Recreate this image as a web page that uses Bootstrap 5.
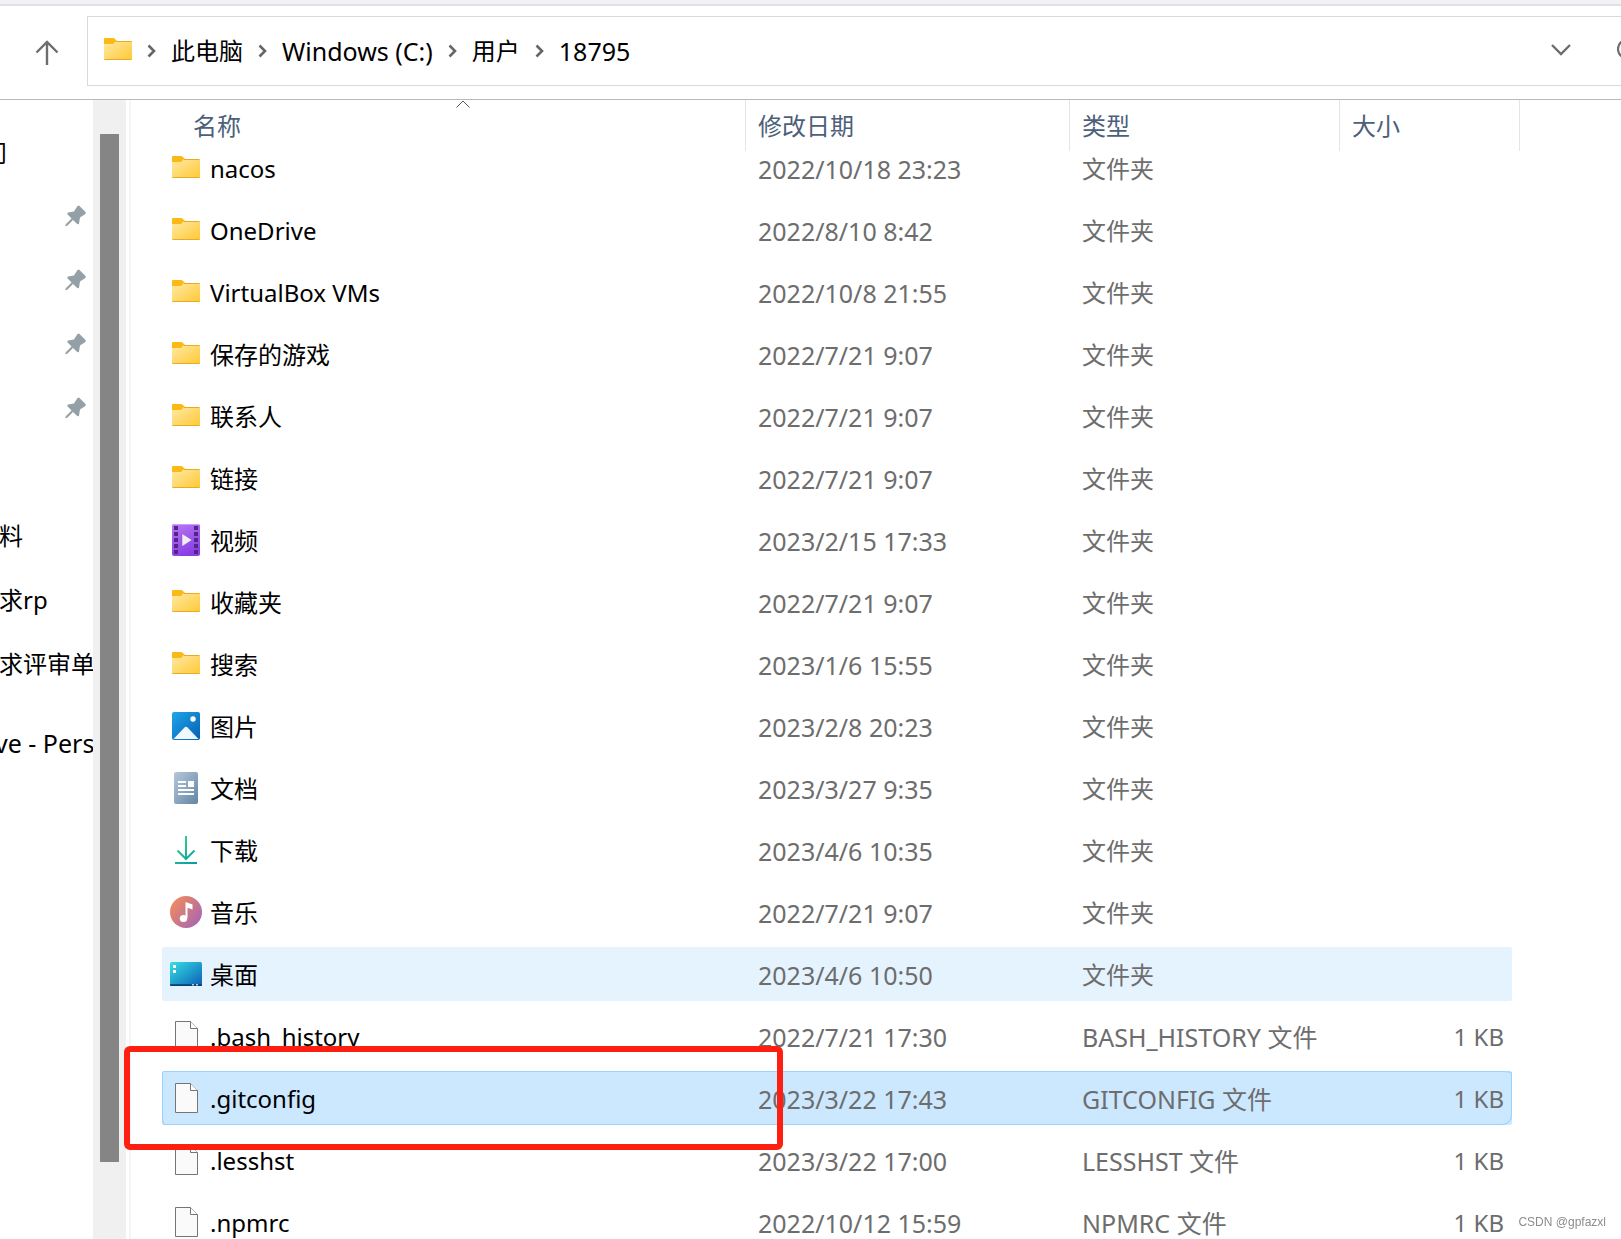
<!DOCTYPE html>
<html lang="zh-CN">
<head>
<meta charset="utf-8">
<meta name="viewport" content="width=device-width, initial-scale=1">
<title>18795</title>
<link href="https://cdn.jsdelivr.net/npm/bootstrap@5.3.0/dist/css/bootstrap.min.css" rel="stylesheet">
<style>
  body { font-family: "Noto Sans", "Noto Sans CJK SC", sans-serif; font-size: 24px; line-height: 34px; color: #000; background: #fff; }
  svg { display: block; flex: none; }
  a { color: inherit; text-decoration: none; }

  .title-edge { height: 6px; background: #f1f1f8; border-bottom: 2px solid #e0e0e6; }
  .address-row { height: 94px; padding: 10px 0 13px; border-bottom: 1px solid #b9b9b9; }
  .up-btn { width: 87px; padding: 4px 0 0 6px; color: #6d6d6d; }
  .address-box { border: 1px solid #d9d9d9; border-right: 0; padding-left: 14px; }
  .crumbs { --bs-breadcrumb-margin-bottom: 0; gap: 15px; font-size: 25px; }
  .crumbs .folder-mark { margin: -2px -2px 0 0; }
  .crumbs .cjk { font-size: 24px; }
  .drop-btn, .refresh-btn { color: #6d6d6d; }
  .drop-btn { padding: 0 45px 2px 0; }

  .side-list { width: 93px; padding-top: 20px; overflow: hidden; white-space: nowrap; }
  .side-list li { height: 64px; padding-top: 15px; margin-left: -1px; }
  .side-list .pinned { padding-left: 66px; padding-top: 21px; }
  .side-list .cut-glyph { text-indent: -16px; padding-top: 16px; }
  .side-list .cut-latin { text-indent: -4px; margin-top: 15px; font-size: 25px; }

  .scroll-track { width: 33px; padding: 34px 7px 0; background: #f0f0f0; }
  .scroll-thumb { width: 19px; height: 93%; background: #858585; }
  .splitter { width: 2px; margin-left: 3px; background: #f5f5f5; }

  .file-table { width: 1358px; margin-left: 31px; table-layout: fixed; border-collapse: separate; border-spacing: 0; color: #6d6d6d; }
  .file-table th { height: 51px; padding: 9px 0 8px 12px; font-weight: 400; color: #4c607a; border-right: 1px solid #e5e5e5; position: relative; }
  .file-table th:first-child { padding-left: 31px; }
  .sort-mark { position: absolute; top: 0; left: 293px; }
  .col-name { width: 584px; } .col-date { width: 324px; } .col-kind { width: 270px; } .col-size { width: 180px; }
  .file-table td { padding: 11px 0 9px 12px; border-bottom: 8px solid transparent; background-clip: padding-box; white-space: nowrap; }
  .file-table td:first-child { padding-left: 8px; color: #000; border-radius: 2px 0 0 2px / 2px 0 0 10px; position: relative; }
  .file-table td:first-child svg { margin: -2px 0 0; }
  .file-table td:nth-child(2), .file-table .ext { font-size: 25px; }
  .file-table td:last-child { padding-right: 8px; border-right: 8px solid transparent; border-radius: 0 10px 10px 0 / 0 2px 10px 0; text-align: right; }
  .file-table .under-header td { padding-top: 1px; }
  .row-hover td { background-color: #e5f3ff; }
  .row-picked td { background-color: #cce8ff; box-shadow: inset 0 1px #99d1ff, inset 0 -1px #99d1ff; }
  .row-picked td:first-child { box-shadow: inset 0 1px #99d1ff, inset 0 -1px #99d1ff, inset 1px 0 #99d1ff; }
  .row-picked td:last-child { box-shadow: inset 0 1px #99d1ff, inset 0 -1px #99d1ff, inset -1px 0 #99d1ff; }
  .marker { position: absolute; z-index: 2; top: -25px; bottom: -25px; left: -38px; right: -37px; border: 6px solid #ff1f10; border-radius: 6px; pointer-events: none; }
  .credit { position: fixed; right: 15px; bottom: 8px; font: 12px/18px "Liberation Sans", sans-serif; color: #8c8c8c; }
</style>
<script src="https://cdn.jsdelivr.net/npm/bootstrap@5.3.0/dist/js/bootstrap.bundle.min.js"></script>
</head>
<body class="vh-100 d-flex flex-column overflow-hidden">

<svg width="0" height="0" class="position-absolute" aria-hidden="true">
  <defs>
    <linearGradient id="gFolder" x1="0" y1="0" x2="1" y2="1"><stop offset="0" stop-color="#ffe9a6"/><stop offset="1" stop-color="#ffc934"/></linearGradient>
    <linearGradient id="gVideo" x1="0" y1="0" x2=".4" y2="1"><stop offset="0" stop-color="#b978f5"/><stop offset="1" stop-color="#8a3fe6"/></linearGradient>
    <linearGradient id="gPicture" x1="0" y1="0" x2="1" y2="1"><stop offset="0" stop-color="#1fa5ea"/><stop offset="1" stop-color="#0560b4"/></linearGradient>
    <linearGradient id="gDoc" x1="0" y1="0" x2="1" y2="1"><stop offset="0" stop-color="#b6c8da"/><stop offset="1" stop-color="#6285a6"/></linearGradient>
    <linearGradient id="gDown" gradientUnits="userSpaceOnUse" x1="5" y1="4" x2="27" y2="28"><stop offset="0" stop-color="#3bd488"/><stop offset="1" stop-color="#0a9ba6"/></linearGradient>
    <linearGradient id="gMusic" x1="0" y1=".1" x2="1" y2=".9"><stop offset="0" stop-color="#f58e56"/><stop offset="1" stop-color="#a463b8"/></linearGradient>
    <linearGradient id="gDesk" x1="0" y1="0" x2="1" y2="1"><stop offset="0" stop-color="#37dfe6"/><stop offset="1" stop-color="#0b5fb5"/></linearGradient>
    <symbol id="folder" viewBox="0 0 32 32"><path d="M2 12V5q0-1 1-1h8q1.200 0 2 1l2 2v4z" fill="#fbb916"/><path d="M2 10h9l3-3h15q1 0 1 1v17q0 1-1 1H3q-1 0-1-1z" fill="url(#gFolder)"/><path d="M14 7.500h15.500M2.500 25.500h27" stroke="#e9ab25" fill="none"/></symbol>
    <symbol id="video" viewBox="0 0 32 32"><rect x="2" width="28" height="32" rx="2" fill="url(#gVideo)"/><path d="M3 .5h26" stroke="#cd9bfa"/><path d="M4 2h4v4H4zm0 6h4v4H4zm0 6h4v4H4zm0 6h4v4H4zm0 6h4v4H4zM24 2h4v4h-4zm0 6h4v4h-4zm0 6h4v4h-4zm0 6h4v4h-4zm0 6h4v4h-4z" fill="#502687"/><path d="M12 9.500l10 6.500-10 6.500z" fill="#eee" stroke="#7a37cc" stroke-width=".4"/></symbol>
    <symbol id="picture" viewBox="0 0 32 32"><rect x="2" y="2" width="28" height="28" rx="2" fill="url(#gPicture)"/><path d="M3.500 29l11-11.500q1.500-1.500 3 0L28.500 29z" fill="#f0f7fd"/><circle cx="23" cy="9" r="2.700" fill="#fff"/></symbol>
    <symbol id="document" viewBox="0 0 32 32"><rect x="4" width="24" height="32" rx="2" fill="url(#gDoc)"/><path d="M8 9h8v2H8zm0 4h8v2H8zm10-4h6v6h-6zM8 17h16v2H8zm0 4h16v2H8z" fill="#fff"/></symbol>
    <symbol id="download" viewBox="0 0 32 32"><path d="M16 2v23M7.500 16.500L16 25l8.500-8.500M5 29h22" fill="none" stroke="url(#gDown)" stroke-width="2"/></symbol>
    <symbol id="music" viewBox="0 0 32 32"><circle cx="16" cy="16" r="16" fill="url(#gMusic)"/><ellipse cx="13.500" cy="22.500" rx="3.700" ry="3.500" fill="#fff"/><path d="M15.500 6l7 2.500v5l-5-1.800V22h-2z" fill="#fff"/></symbol>
    <symbol id="desktop" viewBox="0 0 32 32"><rect y="4" width="32" height="24" rx="1.500" fill="url(#gDesk)"/><path d="M0 26.300h32v.7q0 1-1 1H1q-1 0-1-1z" fill="#0b3f70"/><path d="M3 7h3v3H3zm0 5h3v3H3z" fill="#fff"/><path d="M22 26h2v1.500h-2zm4 0h2v1.500h-2z" fill="#a9d3ef"/></symbol>
    <symbol id="file" viewBox="0 0 32 32"><path d="M5.500 1.500h15l7 7v22h-22z" fill="#fafafa" stroke="#757575"/><path d="M20.500 1.500v7h7" fill="#fff" stroke="#757575"/></symbol>
    <symbol id="pin" viewBox="0 0 22 22"><path d="M12.500 1q1-1 2 0l6 6q1 1-.2 2L15 12.500l-1 6q-.5 1.500-1.800.4L8 15l-5.500 5.500q-1.500 1-2 .5t.5-2L6.500 13.500 2.700 9.600Q1.500 8 3.200 7.400L9 6.500z" fill="#95a0a6"/></symbol>
    <symbol id="sep" viewBox="0 0 9 14"><path d="M1.500 1.500L7 7l-5.500 5.500" fill="none" stroke="#666" stroke-width="2.600"/></symbol>
  </defs>
</svg>

<div class="title-edge flex-shrink-0"></div>

<header class="address-row d-flex flex-shrink-0">
  <button type="button" class="up-btn btn border-0 rounded-0 d-flex align-items-center justify-content-center" aria-label="上移">
    <svg width="24" height="26" viewBox="0 0 24 26"><path d="M12 25V2M1.500 12.500L12 2l10.500 10.500" fill="none" stroke="currentColor" stroke-width="2.400"/></svg>
  </button>
  <div class="address-box flex-grow-1 d-flex align-items-center">
    <nav aria-label="路径" class="flex-grow-1">
      <ol class="crumbs breadcrumb flex-nowrap align-items-center">
        <li class="folder-mark"><svg width="32" height="32"><use href="#folder"/></svg></li>
        <li><svg width="9" height="14"><use href="#sep"/></svg></li>
        <li class="cjk"><a href="#">此电脑</a></li>
        <li><svg width="9" height="14"><use href="#sep"/></svg></li>
        <li><a href="#">Windows (C:)</a></li>
        <li><svg width="9" height="14"><use href="#sep"/></svg></li>
        <li class="cjk"><a href="#">用户</a></li>
        <li><svg width="9" height="14"><use href="#sep"/></svg></li>
        <li><a href="#" aria-current="page">18795</a></li>
      </ol>
    </nav>
    <button type="button" class="drop-btn btn border-0" aria-label="展开">
      <svg width="22" height="14" viewBox="0 0 22 14"><path d="M2 2l9 9 9-9" fill="none" stroke="currentColor" stroke-width="2.400"/></svg>
    </button>
    <button type="button" class="refresh-btn btn border-0 p-0 pb-1 overflow-hidden" aria-label="刷新">
      <svg width="4" height="20" viewBox="0 0 4 20"><circle cx="10" cy="10" r="9" fill="none" stroke="currentColor" stroke-width="2.200"/></svg>
    </button>
  </div>
</header>

<div class="d-flex flex-grow-1 overflow-hidden">
  <ul class="side-list list-unstyled mb-0 flex-shrink-0">
    <li class="cut-glyph">问</li>
    <li class="pinned"><svg width="22" height="22"><use href="#pin"/></svg></li>
    <li class="pinned"><svg width="22" height="22"><use href="#pin"/></svg></li>
    <li class="pinned"><svg width="22" height="22"><use href="#pin"/></svg></li>
    <li class="pinned"><svg width="22" height="22"><use href="#pin"/></svg></li>
    <li></li>
    <li>料</li>
    <li>求rp</li>
    <li>求评审单</li>
    <li class="cut-latin">ve - Pers</li>
  </ul>
  <div class="scroll-track flex-shrink-0"><div class="scroll-thumb"></div></div>
  <div class="splitter flex-shrink-0"></div>

  <main class="flex-grow-1">
    <table class="file-table">
      <thead>
        <tr>
          <th class="col-name" scope="col">名称<svg class="sort-mark" width="16" height="8" viewBox="0 0 16 8"><path d="M1.500 7.500L8 1l6.500 6.500" fill="none" stroke="#555"/></svg></th>
          <th class="col-date" scope="col">修改日期</th>
          <th class="col-kind" scope="col">类型</th>
          <th class="col-size" scope="col">大小</th>
        </tr>
      </thead>
      <tbody>
        <tr class="under-header"><td><div class="d-flex align-items-center gap-2"><svg width="32" height="32"><use href="#folder"/></svg>nacos</div></td><td>2022/10/18 23:23</td><td>文件夹</td><td></td></tr>
        <tr><td><div class="d-flex align-items-center gap-2"><svg width="32" height="32"><use href="#folder"/></svg>OneDrive</div></td><td>2022/8/10 8:42</td><td>文件夹</td><td></td></tr>
        <tr><td><div class="d-flex align-items-center gap-2"><svg width="32" height="32"><use href="#folder"/></svg>VirtualBox VMs</div></td><td>2022/10/8 21:55</td><td>文件夹</td><td></td></tr>
        <tr><td><div class="d-flex align-items-center gap-2"><svg width="32" height="32"><use href="#folder"/></svg>保存的游戏</div></td><td>2022/7/21 9:07</td><td>文件夹</td><td></td></tr>
        <tr><td><div class="d-flex align-items-center gap-2"><svg width="32" height="32"><use href="#folder"/></svg>联系人</div></td><td>2022/7/21 9:07</td><td>文件夹</td><td></td></tr>
        <tr><td><div class="d-flex align-items-center gap-2"><svg width="32" height="32"><use href="#folder"/></svg>链接</div></td><td>2022/7/21 9:07</td><td>文件夹</td><td></td></tr>
        <tr><td><div class="d-flex align-items-center gap-2"><svg width="32" height="32"><use href="#video"/></svg>视频</div></td><td>2023/2/15 17:33</td><td>文件夹</td><td></td></tr>
        <tr><td><div class="d-flex align-items-center gap-2"><svg width="32" height="32"><use href="#folder"/></svg>收藏夹</div></td><td>2022/7/21 9:07</td><td>文件夹</td><td></td></tr>
        <tr><td><div class="d-flex align-items-center gap-2"><svg width="32" height="32"><use href="#folder"/></svg>搜索</div></td><td>2023/1/6 15:55</td><td>文件夹</td><td></td></tr>
        <tr><td><div class="d-flex align-items-center gap-2"><svg width="32" height="32"><use href="#picture"/></svg>图片</div></td><td>2023/2/8 20:23</td><td>文件夹</td><td></td></tr>
        <tr><td><div class="d-flex align-items-center gap-2"><svg width="32" height="32"><use href="#document"/></svg>文档</div></td><td>2023/3/27 9:35</td><td>文件夹</td><td></td></tr>
        <tr><td><div class="d-flex align-items-center gap-2"><svg width="32" height="32"><use href="#download"/></svg>下载</div></td><td>2023/4/6 10:35</td><td>文件夹</td><td></td></tr>
        <tr><td><div class="d-flex align-items-center gap-2"><svg width="32" height="32"><use href="#music"/></svg>音乐</div></td><td>2022/7/21 9:07</td><td>文件夹</td><td></td></tr>
        <tr class="row-hover"><td><div class="d-flex align-items-center gap-2"><svg width="32" height="32"><use href="#desktop"/></svg>桌面</div></td><td>2023/4/6 10:50</td><td>文件夹</td><td></td></tr>
        <tr><td><div class="d-flex align-items-center gap-2"><svg width="32" height="32"><use href="#file"/></svg>.bash_history</div></td><td>2022/7/21 17:30</td><td class="ext">BASH_HISTORY 文件</td><td>1 KB</td></tr>
        <tr class="row-picked"><td><div class="d-flex align-items-center gap-2"><svg width="32" height="32"><use href="#file"/></svg>.gitconfig</div><div class="marker"></div></td><td>2023/3/22 17:43</td><td class="ext">GITCONFIG 文件</td><td>1 KB</td></tr>
        <tr><td><div class="d-flex align-items-center gap-2"><svg width="32" height="32"><use href="#file"/></svg>.lesshst</div></td><td>2023/3/22 17:00</td><td class="ext">LESSHST 文件</td><td>1 KB</td></tr>
        <tr><td><div class="d-flex align-items-center gap-2"><svg width="32" height="32"><use href="#file"/></svg>.npmrc</div></td><td>2022/10/12 15:59</td><td class="ext">NPMRC 文件</td><td>1 KB</td></tr>
      </tbody>
    </table>
  </main>
</div>

<div class="credit">CSDN @gpfazxl</div>
</body>
</html>
